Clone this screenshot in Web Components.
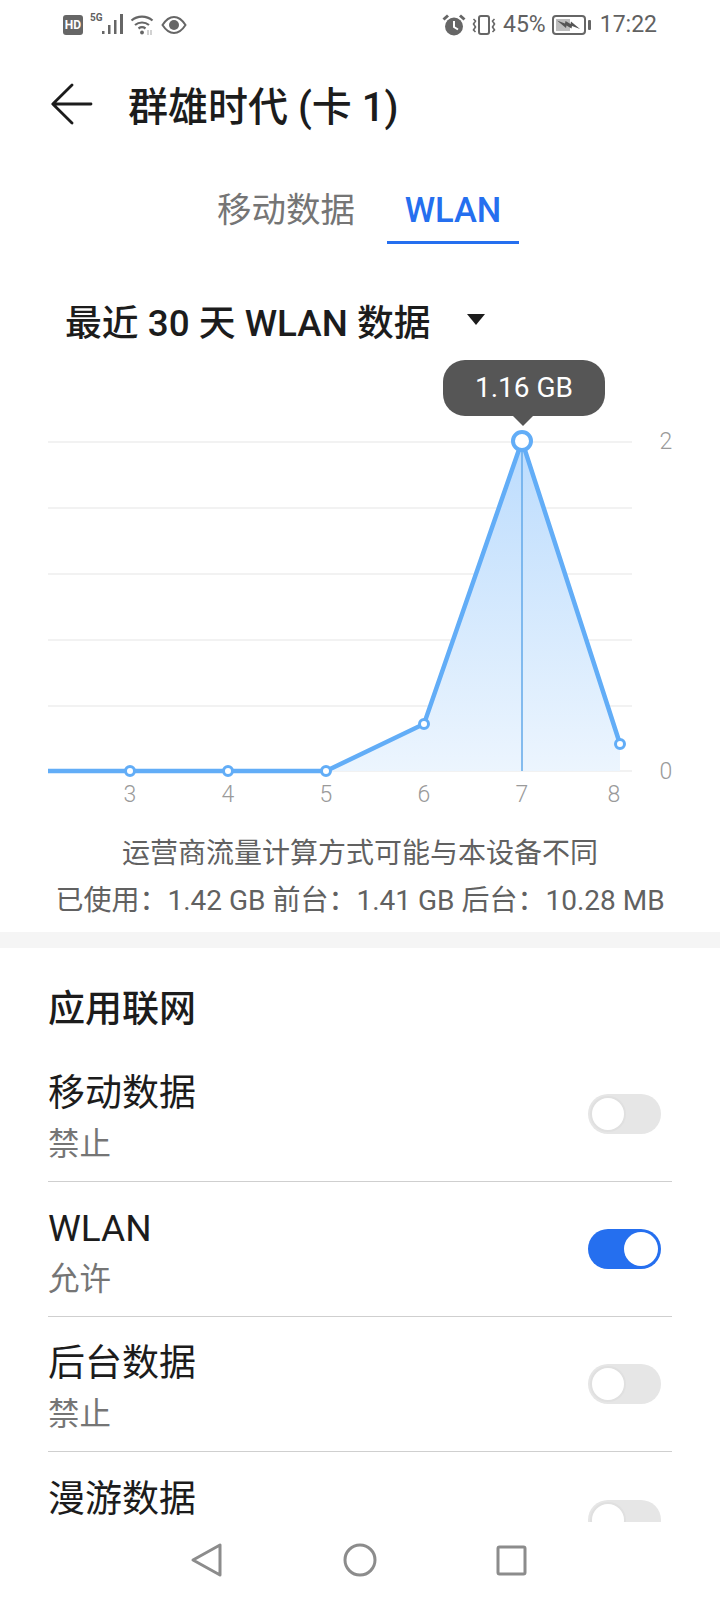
<!DOCTYPE html>
<html lang="zh">
<head>
<meta charset="utf-8">
<title>WLAN</title>
<style>
  html, body { margin: 0; height: 100%; background: #fff; }
  body { font-family: Roboto, "Noto Sans CJK SC", sans-serif; color: #1c1c1c; overflow: hidden; }
  #page { display: flex; flex-direction: column; width: 720px; height: 1600px; }
</style>
</head>
<body>
<div id="page">
  <status-bar></status-bar>
  <app-header>群雄时代 (卡 1)</app-header>
  <tab-bar></tab-bar>
  <period-select>最近 30 天 WLAN 数据</period-select>
  <usage-chart></usage-chart>
  <usage-note></usage-note>
  <app-network>
    <net-row label="移动数据" value="禁止"></net-row>
    <net-row label="WLAN" value="允许" on></net-row>
    <net-row label="后台数据" value="禁止"></net-row>
    <net-row label="漫游数据"></net-row>
  </app-network>
  <nav-bar></nav-bar>
</div>
<script>
/**
 * Status bar along the top of the phone.
 */
class StatusBar extends HTMLElement {
  constructor() {
    super();
    this.attachShadow({ mode: 'open' });
    this.shadowRoot.innerHTML = `
      <style>
        :host { display: flex; justify-content: space-between; align-items: center; height: 48px; padding: 1px 63px 0 63px; box-sizing: border-box; color: #616161; font-size: 23px; }
        .side { display: flex; align-items: center; }
        svg { display: block; }
        .hd { width: 20px; height: 20px; border-radius: 3px; background: #666; color: #fff; font: 700 12px/20px Roboto, sans-serif; text-align: center; }
        .five { width: 12px; font: 700 10px/10px Roboto, sans-serif; align-self: flex-start; margin-left: 7px; }
      </style>
      <div class="side">
        <div class="hd">HD</div>
        <div class="five">5G</div>
        <svg width="22" height="22" viewBox="0 0 22 22" fill="#666"><rect x="0" y="17" width="2.5" height="3"/><rect x="6" y="11" width="2.5" height="9"/><rect x="12" y="6" width="2.5" height="14"/><rect x="18" y="0" width="3" height="20"/></svg>
        <svg width="26" height="24" viewBox="0 0 26 24" fill="none" stroke="#666" stroke-width="2.2" style="margin-left:6px"><path d="M1.500 7.500a16 16 0 0 1 21 0"/><path d="M5 12a11 11 0 0 1 14 0"/><path d="M8.500 15.500a6 6 0 0 1 7 0"/><circle cx="12" cy="19.500" r="1.900" fill="#666" stroke="none"/><path d="M18 17v5M21 17v5" stroke="#bbb" stroke-width="1.300"/></svg>
        <svg width="26" height="20" viewBox="0 0 26 20" fill="none" stroke="#666" stroke-width="2" style="margin-left:5px"><path d="M1.500 10C5 4.500 8.500 2 13 2s8 2.500 11.500 8C21 15.500 17.500 18 13 18S5 15.500 1.500 10Z"/><circle cx="13" cy="10" r="5" fill="#666" stroke="none"/></svg>
      </div>
      <div class="side">
        <svg width="24" height="24" viewBox="0 0 24 24" fill="#666"><circle cx="12" cy="13.500" r="9"/><path d="M12 8v6l4 2.500" fill="none" stroke="#fff" stroke-width="2"/><path d="M1.500 6.500 6 2.500M22.500 6.500 18 2.500" stroke="#666" stroke-width="3" fill="none"/></svg>
        <svg width="26" height="24" viewBox="0 0 26 24" fill="none" stroke="#666" stroke-width="2" style="margin-left:5px"><rect x="8" y="3" width="10" height="18" rx="2"/><path d="M2.500 6l2 2-2 3 2 3-2 3 2 2M23.500 6l-2 2 2 3-2 3 2 3-2 2" stroke-width="1.600"/></svg>
        <span style="margin-left:6px">45%</span>
        <svg width="40" height="22" viewBox="0 0 40 22" style="margin-left:6px"><rect x="1" y="2" width="32" height="18" rx="3" fill="none" stroke="#666" stroke-width="2"/><rect x="4" y="5" width="14" height="12" fill="#bdbdbd"/><path d="M5 6.500l8 3 .5-2.500 5 3 .5-2.500 9 7.500-8-3-.5 2.500-5-3-.5 2.500Z" fill="#555"/><rect x="36" y="6" width="3" height="10" rx="1" fill="#666"/></svg>
        <span style="margin-left:8px">17:22</span>
      </div>
    `;
  }
}

/**
 * Back arrow and page title.
 */
class AppHeader extends HTMLElement {
  constructor() {
    super();
    this.attachShadow({ mode: 'open' });
    this.shadowRoot.innerHTML = `
      <style>
        :host { display: flex; align-items: center; height: 112px; padding-left: 51px; font-size: 40px; font-weight: 500; color: #1c1c1c; }
        svg { display: block; margin-right: 35px; }
      </style>
      <svg width="42" height="42" viewBox="0 0 42 42" fill="none" stroke="#1c1c1c" stroke-width="2.800" stroke-linecap="round" stroke-linejoin="round"><path d="M21 2 1.800 21 21 40M2 21h38"/></svg>
      <slot></slot>
    `;
  }
}

/**
 * Mobile data / WLAN tabs.
 */
class TabBar extends HTMLElement {
  constructor() {
    super();
    this.attachShadow({ mode: 'open' });
    this.shadowRoot.innerHTML = `
      <style>
        :host { display: flex; height: 84px; padding-left: 200px; font-size: 34.500px; color: #757575; }
        .tab { padding: 20px 17px 0; line-height: 61px; height: 61px; white-space: nowrap; }
        .active { color: #256fef; font-weight: 500; border-bottom: 3px solid #256fef; margin-left: 15px; width: 98px; text-align: center; }
      </style>
      <div class="tab">移动数据</div>
      <div class="tab active">WLAN</div>
    `;
  }
}

/**
 * Period dropdown above the chart.
 */
class PeriodSelect extends HTMLElement {
  constructor() {
    super();
    this.attachShadow({ mode: 'open' });
    this.shadowRoot.innerHTML = `
      <style>
        :host { display: flex; align-items: center; height: 65px; margin-top: 43px; padding-left: 65px; font-size: 36.800px; font-weight: 500; }
        svg { display: block; margin-left: 36px; }
      </style>
      <slot></slot>
      <svg width="18" height="11" viewBox="0 0 18 11"><path d="M0 0h18L9 11Z" fill="#1c1c1c"/></svg>
    `;
  }
}

/**
 * Usage line chart with the tooltip over the selected day.
 */
class UsageChart extends HTMLElement {
  constructor() {
    super();
    this.attachShadow({ mode: 'open' });

    // top of the chart is y=352 on the page
    const grid = [90, 156, 222, 288, 354, 419]
      .map((y) => `<line x1="48" x2="632" y1="${y}" y2="${y}" stroke="#f2f2f2" stroke-width="2"/>`).join('');
    const labels = [[130, '3'], [228, '4'], [326, '5'], [424, '6'], [522, '7'], [614, '8']]
      .map(([x, t]) => `<text x="${x}" y="450" text-anchor="middle">${t}</text>`).join('');
    const dots = [[130, 419], [228, 419], [326, 419], [424, 372], [620, 392]]
      .map(([x, y]) => `<circle cx="${x}" cy="${y}" r="4.500" fill="#fff" stroke="#62adf7" stroke-width="3"/>`).join('');

    this.shadowRoot.innerHTML = `
      <style>
        :host { display: block; position: relative; height: 460px; }
        svg { display: block; }
        text { font: 300 23px Roboto, sans-serif; fill: #9a9a9a; }
        .tip { position: absolute; left: 443px; top: 8px; width: 162px; height: 56px; border-radius: 22px; background: #565656; color: #fff; font-size: 28px; line-height: 56px; text-align: center; }
        .tip::after { content: ""; position: absolute; left: 70px; top: 56px; border: 10px solid transparent; border-top-color: #565656; border-bottom: 0; }
      </style>
      <svg width="720" height="460" viewBox="0 0 720 460">
        <defs>
          <linearGradient id="fill" x1="0" y1="0" x2="0" y2="1">
            <stop offset="0" stop-color="#bcdcfd"/>
            <stop offset="1" stop-color="#ecf5fe"/>
          </linearGradient>
        </defs>
        ${grid}
        <path d="M326 419 424 372 522 89 620 392V419Z" fill="url(#fill)"/>
        <line x1="522" x2="522" y1="89" y2="419" stroke="#62a9e8" stroke-width="1.500"/>
        <path d="M48 419H326L424 372 522 89 620 392" fill="none" stroke="#62adf7" stroke-width="4.500"/>
        ${dots}
        <circle cx="522" cy="89" r="9" fill="#fff" stroke="#62adf7" stroke-width="4"/>
        ${labels}
        <text x="666" y="97" text-anchor="middle">2</text>
        <text x="666" y="427" text-anchor="middle">0</text>
      </svg>
      <div class="tip">1.16 GB</div>
    `;
  }
}

/**
 * Two centred lines under the chart.
 */
class UsageNote extends HTMLElement {
  constructor() {
    super();
    this.attachShadow({ mode: 'open' });
    this.shadowRoot.innerHTML = `
      <style>
        :host { display: block; text-align: center; font-size: 28px; line-height: 47px; color: #616161; padding-top: 18px; padding-bottom: 8px; white-space: nowrap; }
      </style>
      <div>运营商流量计算方式可能与本设备不同</div>
      <div>已使用：1.42 GB 前台：1.41 GB 后台：10.28 MB</div>
    `;
  }
}

/**
 * Grey band, section heading and its rows. Cut off by the nav bar.
 */
class AppNetwork extends HTMLElement {
  constructor() {
    super();
    this.attachShadow({ mode: 'open' });
    this.shadowRoot.innerHTML = `
      <style>
        :host { display: block; flex: 1; min-height: 0; overflow: hidden; border-top: 16px solid #f5f5f5; padding: 0 48px; }
        h2 { margin: 0; height: 99px; line-height: 124px; font-size: 37px; font-weight: 500; }
      </style>
      <h2>应用联网</h2>
      <slot></slot>
    `;
  }
}

/**
 * One row: label, state and a switch.
 */
class NetRow extends HTMLElement {
  constructor() {
    super();
    this.attachShadow({ mode: 'open' });
    this.shadowRoot.innerHTML = `
      <style>
        :host { display: flex; align-items: center; justify-content: space-between; height: 135px; box-sizing: border-box; border-bottom: 1px solid #cfcfcf; }
        :host(:last-of-type) { border-bottom: 0; }
        .text { padding-top: 7px; }
        .label { font-size: 37px; line-height: 50px; }
        .value { font-size: 31.500px; line-height: 42px; min-height: 42px; color: #757575; margin-top: 5px; }
        .toggle { position: relative; width: 73px; height: 40px; border-radius: 20px; background: #e6e6e6; margin-right: 11px; }
        .knob { position: absolute; left: 2px; top: 2px; width: 32px; height: 32px; border-radius: 50%; background: #fff; border: 2px solid #e0e0e0; }
        .toggle.on { background: #256fef; }
        .toggle.on .knob { left: 36px; top: 3px; width: 34px; height: 34px; border: 0; }
      </style>
      <div class="text">
        <div class="label"></div>
        <div class="value"></div>
      </div>
      <div class="toggle"><div class="knob"></div></div>
    `;
  }

  connectedCallback() {
    this.shadowRoot.querySelector('.label').textContent = this.getAttribute('label');
    this.shadowRoot.querySelector('.value').textContent = this.getAttribute('value');
    this.shadowRoot.querySelector('.toggle').classList.toggle('on', this.hasAttribute('on'));
  }
}

/**
 * System navigation bar.
 */
class NavBar extends HTMLElement {
  constructor() {
    super();
    this.attachShadow({ mode: 'open' });
    this.shadowRoot.innerHTML = `
      <style>
        :host { display: flex; align-items: center; justify-content: space-between; height: 78px; padding: 0 193px 2px 190px; box-sizing: border-box; flex: none; background: #fff; }
        svg { display: block; }
      </style>
      <svg width="34" height="36" viewBox="0 0 34 36" fill="none" stroke="#8c8c8c" stroke-width="3" stroke-linejoin="round"><path d="M30 3v30L3 18Z"/></svg>
      <svg width="34" height="34" viewBox="0 0 34 34" fill="none" stroke="#8c8c8c" stroke-width="3"><circle cx="17" cy="17" r="15"/></svg>
      <svg width="31" height="31" viewBox="0 0 31 31" fill="none" stroke="#8c8c8c" stroke-width="3" stroke-linejoin="round"><rect x="2" y="2" width="27" height="27" rx="1.500"/></svg>
    `;
  }
}

// Define the custom elements
customElements.define('status-bar', StatusBar);
customElements.define('app-header', AppHeader);
customElements.define('tab-bar', TabBar);
customElements.define('period-select', PeriodSelect);
customElements.define('usage-chart', UsageChart);
customElements.define('usage-note', UsageNote);
customElements.define('app-network', AppNetwork);
customElements.define('net-row', NetRow);
customElements.define('nav-bar', NavBar);
</script>
</body>
</html>
